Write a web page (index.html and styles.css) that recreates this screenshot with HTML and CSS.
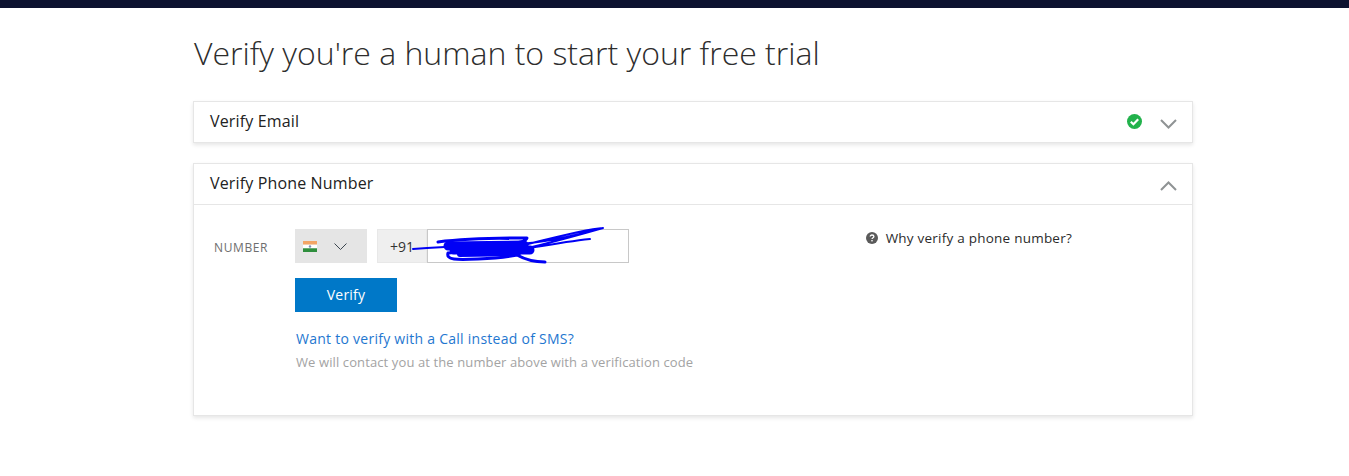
FILE: index.html
```html
<!DOCTYPE html>
<html lang="en">
<head>
<meta charset="utf-8">
<title>Verify</title>
<link rel="stylesheet" href="styles.css">
</head>
<body>
<div class="topbar"></div>
<main class="page">
  <h1 class="title">Verify you're a human to start your free trial</h1>
  <section class="card card-email">
    <header class="card-head">
      <h2 class="card-title">Verify Email</h2>
      <svg class="check" width="15" height="15" viewBox="0 0 15 15"><circle cx="7.5" cy="7.5" r="7.5" fill="#22b24c"/><path d="M3.800 7.800l2.600 2.500 4.800-5" fill="none" stroke="#fff" stroke-width="2.200"/></svg>
      <svg class="chev" width="17" height="10" viewBox="0 0 17 10"><path d="M1 1l7.500 7.500L16 1" fill="none" stroke="#8f9394" stroke-width="2"/></svg>
    </header>
  </section>
  <section class="card">
    <header class="card-head card-head-open">
      <h2 class="card-title">Verify Phone Number</h2>
      <svg class="chev" width="17" height="10" viewBox="0 0 17 10"><path d="M1 9l7.500-7.500L16 9" fill="none" stroke="#8f9394" stroke-width="2"/></svg>
    </header>
    <div class="card-body">
      <div class="form">
        <div class="row">
          <span class="label">NUMBER</span>
          <div class="country">
            <svg class="flag" width="14" height="11" viewBox="0 0 14 11"><rect width="14" height="3.700" fill="#f3a566"/><rect y="3.700" width="14" height="3.600" fill="#fff"/><rect y="7.300" width="14" height="3.700" fill="#2f8f3e"/><circle cx="7" cy="5.500" r="1.200" fill="#7d8fb5"/></svg>
            <svg class="caret" width="13" height="7" viewBox="0 0 13 7"><path d="M.5.5l6 6 6-6" fill="none" stroke="#3c4650" stroke-width="1"/></svg>
          </div>
          <span class="prefix">+91</span>
          <span class="phone"></span>
          <svg class="scribble" width="200" height="42" viewBox="0 0 200 42"><g fill="none" stroke="#0000f5" stroke-linecap="round" stroke-linejoin="round"><path stroke-width="2" d="M1 25C30 23 60 21 90 21C130 20 165 11 191 4C175 5 140 14 112 21M191 4C170 10 145 17 120 23M178 15C150 18 125 23 106 26"/><path stroke-width="3" d="M26 18C50 15 90 14 115 14C114 19 95 21 70 21"/><path stroke-width="9" d="M36 22L112 21M42 26L118 26"/><path stroke-width="6" d="M48 30L106 29"/><path stroke-width="3" d="M36 29C34 36 44 36 66 35C88 34 100 32 105 31C112 35 122 38 133 38M36 29C60 27 100 27 120 25"/></g></svg>
        </div>
        <button class="btn" type="button">Verify</button>
        <a class="call-link" href="#">Want to verify with a Call instead of SMS?</a>
        <p class="hint">We will contact you at the number above with a verification code</p>
      </div>
      <div class="why">
        <svg width="12" height="12" viewBox="0 0 12 12"><circle cx="6" cy="6" r="6" fill="#5a5a5a"/><path d="M4.200 4.600C4.200 3.500 5 3 6 3s1.900.6 1.900 1.600C7.900 5.800 6 5.700 6 7.100" fill="none" stroke="#fff" stroke-width="1.300"/><rect x="5.300" y="8" width="1.400" height="1.400" fill="#fff"/></svg>
        <span>Why verify a phone number?</span>
      </div>
    </div>
  </section>
</main>
</body>
</html>
```
FILE: styles.css
```css
* { box-sizing: border-box; }
html, body { margin: 0; padding: 0; }
body {
  background: #fff;
  font-family: "Open Sans", "Noto Sans", sans-serif;
  color: #2b2b2b;
  height: 476px;
  overflow: hidden;
}
.topbar { height: 8px; background: #0c1230; }
.page { width: 1000px; margin-left: 193px; }
.title {
  margin: 0;
  padding: 23px 0 0 1px;
  height: 93px;
  font-size: 32px;
  line-height: 44px;
  font-weight: 300;
  color: #2d2d2d;
}
.card {
  background: #fff;
  border: 1px solid #e6e6e6;
  box-shadow: 0 2px 4px rgba(0,0,0,.1);
}
.card-email { height: 42px; margin-bottom: 20px; }
.card-head {
  display: flex;
  align-items: center;
  height: 39px;
  padding: 0 15px 0 16px;
}
.card-head-open { height: 41px; border-bottom: 1px solid #e6e6e6; }
.card-title { margin: 0 auto 2px 0; font-size: 16px; font-weight: 400; color: #222; letter-spacing: .15px; }
.check { margin-right: 18px; }
.chev { margin-top: 4px; }
.card-body {
  display: flex;
  justify-content: space-between;
  height: 210px;
  padding: 24px 120px 0 20px;
}
.form { display: flex; flex-direction: column; align-items: flex-start; }
.row { display: flex; align-items: center; height: 34px; position: relative; }
.label { width: 81px; padding-top: 2px; font-size: 12px; letter-spacing: .6px; color: #6e6e6e; }
.country {
  width: 72px; height: 34px; background: #e5e5e5;
  display: flex; align-items: center; padding-left: 8px; gap: 17px;
  margin-right: 10px;
}
.prefix {
  width: 50px; height: 34px; background: #efefef; border: 1px solid #e8e8e8;
  display: flex; align-items: center; padding-left: 12px; font-size: 14px; color: #333;
}
.phone { width: 202px; height: 34px; border: 1px solid #c8c8c8; background: #fff; }
.scribble { position: absolute; left: 198px; top: -5px; }
.btn {
  margin: 15px 0 0 81px;
  width: 102px; height: 34px; padding: 0 0 2px;
  background: #0078c8; border: 0; color: #fff;
  font: 400 14px "Open Sans", sans-serif;
  letter-spacing: .2px;
}
.call-link { margin: 17px 0 0 82px; font-size: 14px; letter-spacing: .26px; color: #1f77d0; text-decoration: none; line-height: 20px; }
.hint { margin: 4px 0 0 82px; font-size: 13px; letter-spacing: .11px; color: #a3a3a3; line-height: 18px; }
.why { display: flex; align-items: flex-start; gap: 8px; font-size: 13.500px; letter-spacing: .23px; line-height: 18px; color: #2b2b2b; }
.why svg { margin-top: 3px; }
```
